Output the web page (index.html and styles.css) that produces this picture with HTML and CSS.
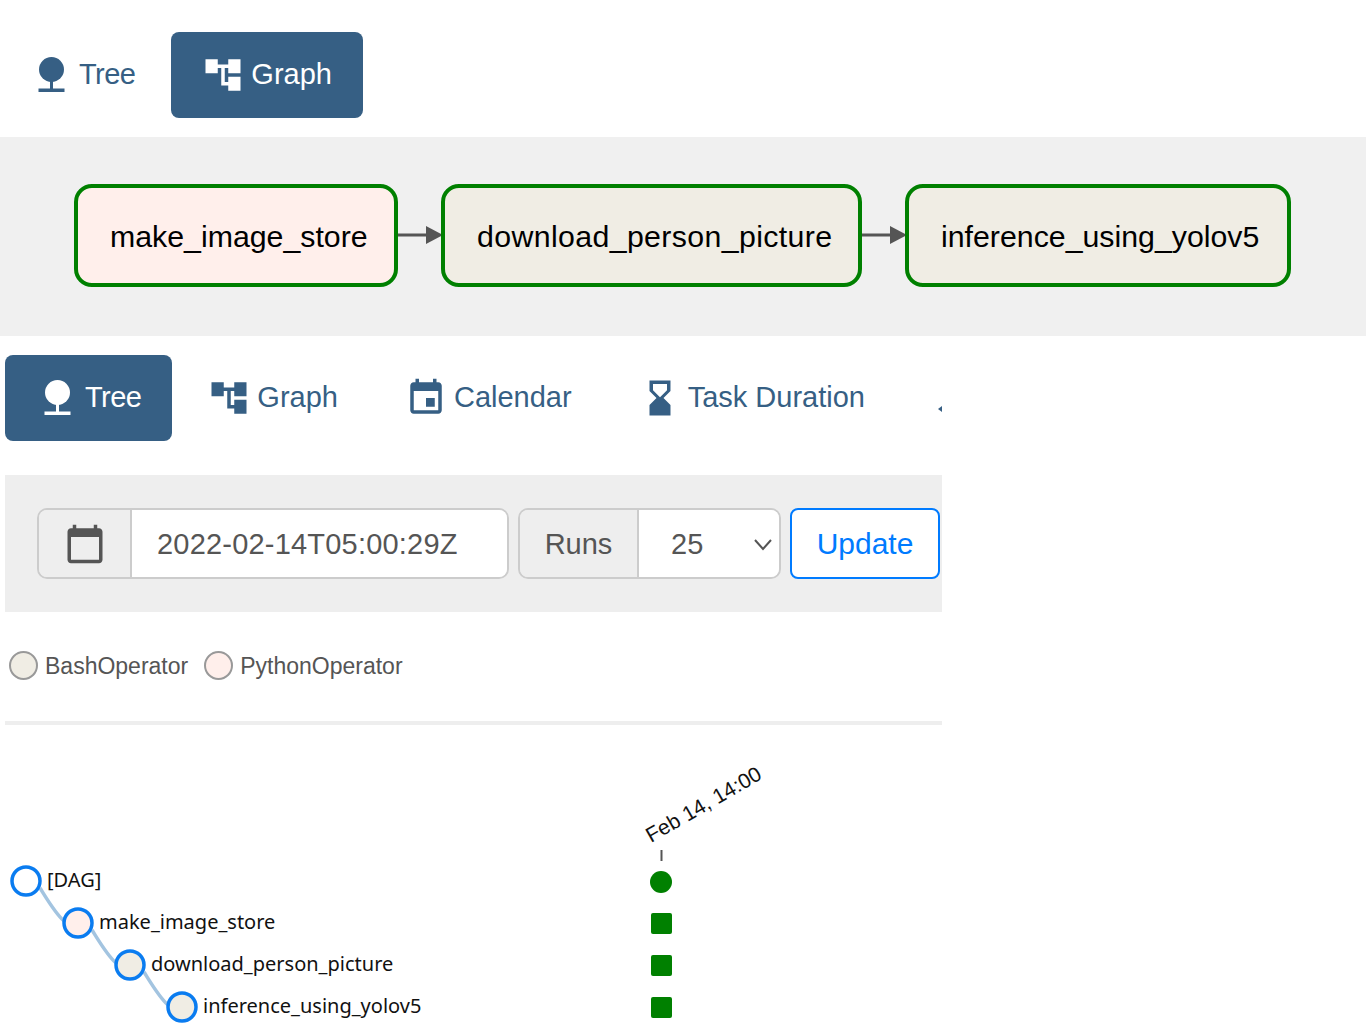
FILE: index.html
```html
<!DOCTYPE html>
<html lang="en">
<head>
  <meta charset="UTF-8">
  <title>DAG tree view</title>
  <link rel="stylesheet" href="styles.css">
</head>
<body>

<!-- graph screenshot part -->
<div class="tabs tabs-top">
  <a class="tab tab-tree">
    <svg class="icon" viewBox="0 0 42 42"><circle cx="21.5" cy="15.5" r="12.5"/><rect x="20" y="26" width="3" height="9"/><rect x="8.5" y="34.5" width="26" height="3.5"/></svg>
    <span class="tab-label">Tree</span>
  </a>
  <a class="tab active">
    <svg class="icon" viewBox="0 0 24 24"><path d="M22 11V3h-7v3H9V3H2v8h7V8h2v10h4v3h7v-8h-7v3h-2V8h2v3z"/></svg>
    <span class="tab-label">Graph</span>
  </a>
</div>

<div class="graph-panel">
  <div class="node python">make_image_store</div>
  <svg class="arrow" viewBox="0 0 43 20"><rect x="0" y="8.5" width="30" height="3"/><polygon points="28,1 45,10 28,19"/></svg>
  <div class="node bash node-download">download_person_picture</div>
  <svg class="arrow" viewBox="0 0 43 20"><rect x="0" y="8.5" width="30" height="3"/><polygon points="28,1 45,10 28,19"/></svg>
  <div class="node bash node-inference">inference_using_yolov5</div>
</div>

<!-- tree screenshot part -->
<div class="content">
  <div class="tabs tabs-main">
    <a class="tab tab-tree active">
      <svg class="icon" viewBox="0 0 42 42"><circle cx="21.5" cy="15.5" r="12.5"/><rect x="20" y="26" width="3" height="9"/><rect x="8.5" y="34.5" width="26" height="3.5"/></svg>
      <span class="tab-label">Tree</span>
    </a>
    <a class="tab">
      <svg class="icon" viewBox="0 0 24 24"><path d="M22 11V3h-7v3H9V3H2v8h7V8h2v10h4v3h7v-8h-7v3h-2V8h2v3z"/></svg>
      <span class="tab-label">Graph</span>
    </a>
    <a class="tab">
      <svg class="icon" viewBox="0 0 24 24"><path d="M17 12h-5v5h5v-5zM16 1v2H8V1H6v2H5c-1.11 0-1.99.9-1.99 2L3 19c0 1.1.89 2 2 2h14c1.1 0 2-.9 2-2V5c0-1.1-.9-2-2-2h-1V1h-2zm3 18H5V8h14v11z"/></svg>
      <span class="tab-label">Calendar</span>
    </a>
    <a class="tab">
      <svg class="icon" viewBox="0 0 24 24"><path d="M18 22l-.01-6L14 12l3.99-4.01L18 2H6v6l4 4-4 3.99V22h12zM8 7.5V4h8v3.5l-4 4-4-4z"/></svg>
      <span class="tab-label">Task Duration</span>
    </a>
    <a class="tab">
      <svg class="icon" viewBox="0 0 42 42"><polygon points="6,32 10,29 10,35"/></svg>
    </a>
  </div>

  <div class="filter-bar">
    <div class="input-group date-group">
      <div class="addon date-addon">
        <svg class="cal-icon" viewBox="0 0 24 24"><path d="M20 3h-1V1h-2v2H7V1H5v2H4c-1.1 0-2 .9-2 2v16c0 1.1.9 2 2 2h16c1.1 0 2-.9 2-2V5c0-1.1-.9-2-2-2zm0 18H4V8h16v13z"/></svg>
      </div>
      <div class="field date-field">2022-02-14T05:00:29Z</div>
    </div>
    <div class="input-group runs-group">
      <div class="addon runs-addon">Runs</div>
      <div class="field runs-field">
        25
        <svg class="chevron" viewBox="0 0 18 12"><polyline points="1,1 9,10 17,1"/></svg>
      </div>
    </div>
    <button class="update-btn">Update</button>
  </div>

  <div class="legend">
    <span class="dot bash"></span><span class="legend-label">BashOperator</span>
    <span class="dot python"></span><span class="legend-label">PythonOperator</span>
  </div>

  <div class="divider"></div>

  <svg class="tree" width="937" height="308" viewBox="5 725 937 308">
    <path class="link" d="M40 888C47 899 55 913 64 921"/>
    <path class="link" d="M92 930C99 941 107 955 116 963"/>
    <path class="link" d="M144 972C151 983 159 997 168 1005"/>

    <circle class="tree-node" cx="26" cy="881" r="14" fill="#fff"/>
    <circle class="tree-node" cx="78" cy="923" r="14" fill="#ffefeb"/>
    <circle class="tree-node" cx="130" cy="965" r="14" fill="#f0ede4"/>
    <circle class="tree-node" cx="182" cy="1007" r="14" fill="#f0ede4"/>

    <text class="tree-label" x="47" y="887">[DAG]</text>
    <text class="tree-label" x="99" y="929">make_image_store</text>
    <text class="tree-label" x="151" y="971">download_person_picture</text>
    <text class="tree-label" x="203" y="1013">inference_using_yolov5</text>

    <text class="date-label" transform="translate(651 843) rotate(-30)">Feb 14, 14:00</text>
    <line class="tick" x1="661.5" y1="850" x2="661.5" y2="861"/>

    <circle class="state" cx="661" cy="882" r="11"/>
    <rect class="state" x="651" y="913" width="21" height="21" rx="2"/>
    <rect class="state" x="651" y="955" width="21" height="21" rx="2"/>
    <rect class="state" x="651" y="997" width="21" height="21" rx="2"/>
  </svg>
</div>

</body>
</html>
```

FILE: styles.css
```css
body {
  margin: 0;
  background: #fff;
  font-family: "Liberation Sans", Arial, sans-serif;
  overflow: hidden;
}

/* tabs */
.tabs {
  display: flex;
  gap: 5px;
}
.tabs-top {
  margin: 32px 0 19px -1px;
}
.tabs-main {
  width: 937px;
  overflow: hidden;
  margin-bottom: 34px;
}
.tab {
  display: flex;
  align-items: center;
  gap: 7px;
  flex-shrink: 0;
  height: 86px;
  padding: 0 31px;
  border-radius: 8px;
  font-size: 29px;
  color: #365f84;
}
.tab.active {
  background: #365f84;
  color: #fff;
}
.tab-label {
  padding-bottom: 2px;
}
.tab-tree .tab-label {
  letter-spacing: -0.55px;
}
.icon {
  width: 42px;
  height: 42px;
  fill: currentColor;
}

/* graph */
.graph-panel {
  display: flex;
  align-items: center;
  height: 199px;
  padding: 0 0 3px 74px;
  background: #f0f0f0;
  box-sizing: border-box;
}
.node {
  display: flex;
  align-items: center;
  height: 103px;
  padding: 4px 0 0 32px;
  border: 4.5px solid #008000;
  border-radius: 18px;
  box-sizing: border-box;
  font-size: 30.3px;
  color: #000;
}
.node.python {
  width: 324px;
  background: #ffefeb;
}
.node.bash {
  background: #f0ede4;
}
.node-download {
  width: 421px;
  letter-spacing: 0.37px;
}
.node-inference {
  width: 386px;
}
.arrow {
  width: 43px;
  height: 20px;
  fill: #555;
  overflow: visible;
}

/* tree view */
.content {
  width: 937px;
  margin: 19px 0 0 5px;
}
.filter-bar {
  display: flex;
  align-items: center;
  gap: 9px;
  height: 137px;
  padding-left: 32px;
  background: #eee;
  box-sizing: border-box;
  font-size: 29px;
  color: #555;
}
.input-group {
  display: flex;
  height: 71px;
  border: 2.5px solid #ccc;
  border-radius: 10px;
  box-sizing: border-box;
  overflow: hidden;
}
.date-group {
  width: 472px;
}
.runs-group {
  width: 263px;
}
.addon {
  display: flex;
  align-items: center;
  justify-content: center;
  flex-shrink: 0;
  padding-top: 2px;
  border-right: 2.5px solid #ccc;
  background: #eee;
  box-sizing: border-box;
}
.date-addon {
  width: 93px;
  padding-top: 0;
}
.runs-addon {
  width: 119px;
}
.field {
  display: flex;
  align-items: center;
  flex-grow: 1;
  padding-top: 2px;
  background: #fff;
}
.date-field {
  padding-left: 25px;
  letter-spacing: 0.2px;
}
.runs-field {
  justify-content: space-between;
  padding: 2px 7px 0 32px;
}
.cal-icon {
  width: 42px;
  height: 42px;
  fill: #555;
}
.chevron {
  width: 18px;
  height: 12px;
  fill: none;
  stroke: #555;
  stroke-width: 2;
}
.update-btn {
  width: 150px;
  height: 71px;
  padding: 0;
  border: 2px solid #007bff;
  border-radius: 8px;
  background: #fff;
  font-family: inherit;
  font-size: 30px;
  color: #007bff;
}

.legend {
  display: flex;
  align-items: center;
  height: 109px;
  padding: 0 0 2px 4px;
  box-sizing: border-box;
  font-size: 23px;
  color: #555;
}
.dot {
  width: 29px;
  height: 29px;
  margin-right: 7px;
  border: 2px solid #999;
  border-radius: 50%;
  box-sizing: border-box;
}
.dot.bash {
  background: #f0ede4;
}
.dot.python {
  background: #ffefeb;
}
.legend-label {
  margin-right: 16px;
  padding-top: 2px;
}
.divider {
  height: 4px;
  background: #eee;
}

.tree {
  display: block;
}
.link {
  fill: none;
  stroke: #a3c4e0;
  stroke-width: 3.5;
}
.tree-node {
  stroke: #0a7cf0;
  stroke-width: 3.5;
}
.tree-label {
  font-family: "Noto Sans", sans-serif;
  font-size: 20px;
  fill: #111;
}
.date-label {
  font-family: "Liberation Sans", sans-serif;
  font-size: 21px;
  fill: #111;
}
.tick {
  stroke: #555;
  stroke-width: 2;
}
.state {
  fill: #008000;
}
```
